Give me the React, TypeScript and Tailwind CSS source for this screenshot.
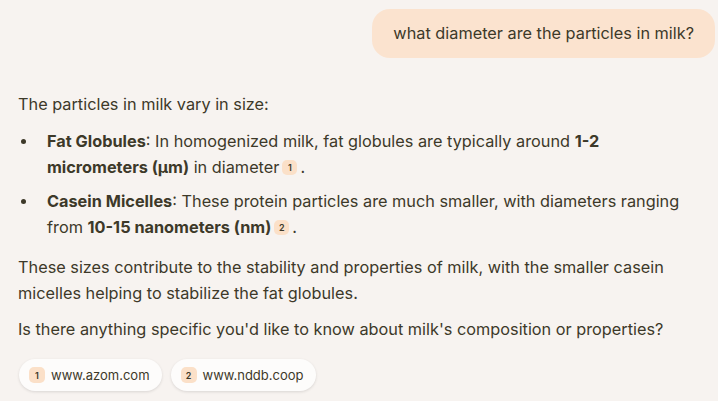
import React from "react";

const font = { fontFamily: "Inter, 'Noto Sans', sans-serif" };

function Cite({ n }: { n: number }) {
  return (
    <span className="mx-[3px] inline-flex h-[15px] w-[15px] translate-y-[-1px] items-center justify-center rounded-[5px] bg-[#fbe0c8] align-middle text-[9px] font-semibold leading-none text-[#3d3929]">
      {n}
    </span>
  );
}

function Source({ n, url }: { n: number; url: string }) {
  return (
    <div className="flex h-[32px] items-center gap-[6px] rounded-full bg-[#fdfcfb] pl-[10px] pr-[12px] shadow-[0_1px_3px_rgba(0,0,0,0.12)]">
      <span className="flex h-[16px] w-[16px] items-center justify-center rounded-[5px] bg-[#fbe0c8] text-[9px] font-semibold leading-none text-[#3d3929]">
        {n}
      </span>
      <span className="text-[13px] text-[#3d3929]">{url}</span>
    </div>
  );
}

function Dot() {
  return (
    <span className="flex h-[26px] w-[29px] shrink-0 items-center pl-[3px]">
      <span className="h-[5px] w-[5px] rounded-full bg-[#3d3929]" />
    </span>
  );
}

export default function App() {
  return (
    <div className="min-h-[401px] w-[718px] bg-[#f7f3f0] text-[#3d3929]" style={font}>
      <div className="flex justify-end pr-[3px] pt-[9px]">
        <div className="rounded-[18px] bg-[#fbe3cf] px-[21px] py-[12px] text-[16.3px] leading-[25px]">
          what diameter are the particles in milk?
        </div>
      </div>

      <div className="pl-[18px] pr-[16px] pt-[33px] text-[16.3px] leading-[26px]">
        <p>The particles in milk vary in size:</p>

        <ul className="mt-[11px] flex flex-col gap-[8px]">
          <li className="flex">
            <Dot />
            <span>
              <b className="font-bold">Fat Globules</b>: In homogenized milk, fat globules are typically around{" "}
              <b className="font-bold">1-2 micrometers (µm)</b> in diameter
              <Cite n={1} />.
            </span>
          </li>
          <li className="flex">
            <Dot />
            <span>
              <b className="font-bold">Casein Micelles</b>: These protein particles are much smaller, with diameters ranging
              from <b className="font-bold">10-15 nanometers (nm)</b>
              <Cite n={2} />.
            </span>
          </li>
        </ul>

        <p className="mt-[14px]">
          These sizes contribute to the stability and properties of milk, with the smaller casein micelles helping to
          stabilize the fat globules.
        </p>

        <p className="mt-[10px]">Is there anything specific you'd like to know about milk's composition or properties?</p>

        <div className="mt-[17px] flex gap-[9px] pl-[1px]">
          <Source n={1} url="www.azom.com" />
          <Source n={2} url="www.nddb.coop" />
        </div>
      </div>
    </div>
  );
}
